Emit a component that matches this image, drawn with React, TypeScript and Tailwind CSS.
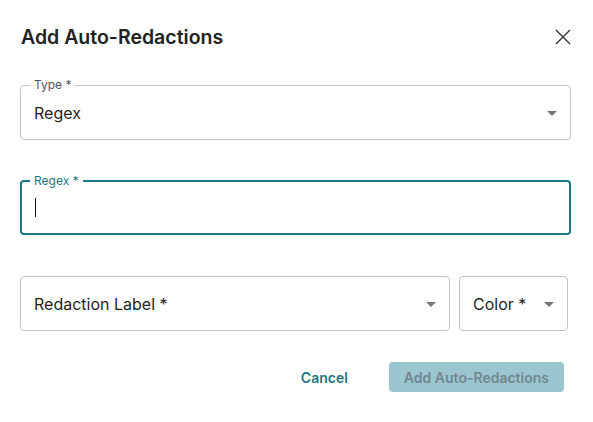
function ArrowDown() {
  return (
    <svg width="24" height="24" viewBox="0 0 24 24" className="shrink-0">
      <path d="M7 10l5 5 5-5z" fill="#757575" />
    </svg>
  );
}

function SelectField({ label, value, className }: { label: string; value?: string; className?: string }) {
  return (
    <div className={`relative h-[55px] rounded-[4px] border border-[#c4c4c4] flex items-center pl-[13px] pr-[6px] ${className ?? ""}`}>
      {value && (
        <span className="absolute left-[9px] -top-[8px] bg-white px-[4px] text-[12px] leading-[14px] text-[#555]">
          {label}
        </span>
      )}
      <span className="flex-1 text-[16px] text-[#1f1f1f]">{value ?? label}</span>
      <ArrowDown />
    </div>
  );
}

export default function App() {
  return (
    <div className="w-[593px] h-[422px] bg-white pl-[20px] pr-[22px] pt-[23px] font-['Inter',sans-serif]">
      <div className="flex items-center justify-between h-[28px]">
        <h2 className="text-[19.5px] font-semibold text-[#222] leading-[28px] ml-[1px]">Add Auto-Redactions</h2>
        <svg width="18" height="18" viewBox="0 0 18 18" className="mr-[-1px]">
          <path d="M2 2L16 16M16 2L2 16" stroke="#333" strokeWidth="1.4" />
        </svg>
      </div>

      <SelectField label="Type *" value="Regex" className="mt-[34px]" />

      <div className="relative mt-[40px] h-[55px] rounded-[4px] border-2 border-[#1c7686] flex items-center pl-[13px]">
        <span className="absolute left-[8px] -top-[8px] bg-white px-[4px] text-[12px] leading-[14px] text-[#1c7686]">
          Regex *
        </span>
        <span className="w-[1px] h-[19px] bg-[#111]" />
      </div>

      <div className="flex gap-[9px] mt-[41px] pr-[3px]">
        <SelectField label="Redaction Label *" className="flex-1" />
        <SelectField label="Color *" className="w-[109px]" />
      </div>

      <div className="flex justify-end items-center gap-[41px] mt-[31px] pr-[7px]">
        <span className="text-[14px] font-semibold text-[#1c7686]">Cancel</span>
        <div className="h-[30px] px-[15px] rounded-[4px] bg-[#9bc6cf] flex items-center text-[14px] font-semibold text-[#71878d]">
          Add Auto-Redactions
        </div>
      </div>
    </div>
  );
}
